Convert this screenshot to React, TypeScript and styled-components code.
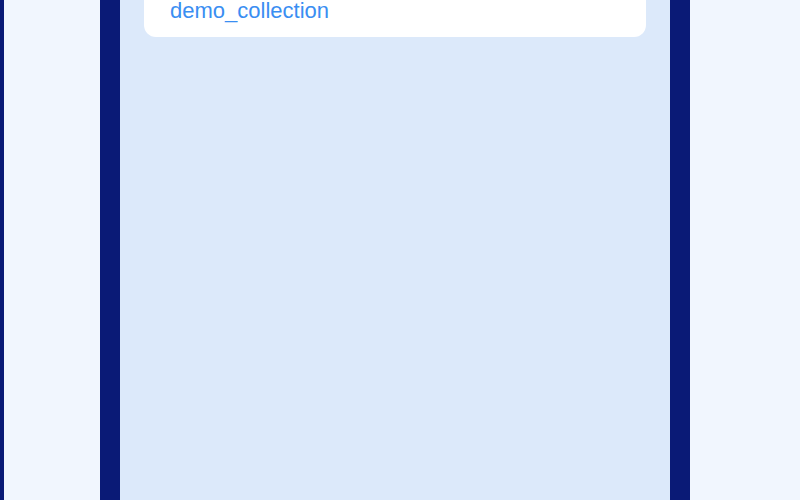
import React from "react";
import styled, { createGlobalStyle } from "styled-components";

const Global = createGlobalStyle`
  html, body, #root { margin: 0; padding: 0; height: 100%; }
  body { background: #f1f6fe; font-family: "Liberation Sans", Arial, sans-serif; overflow: hidden; }
`;

const Page = styled.div`
  display: flex;
  height: 100vh;
  background: #f1f6fe;
`;

const EdgeStrip = styled.div`
  width: 4px;
  flex: none;
  background: #0a1a76;
`;

const Gutter = styled.div<{ $w: number }>`
  width: ${(p) => p.$w}px;
  flex: none;
`;

const DeviceFrame = styled.div`
  box-sizing: border-box;
  width: 590px;
  flex: none;
  border-left: 20px solid #0a1a76;
  border-right: 20px solid #0a1a76;
  background: #dce9fa;
  display: flex;
  flex-direction: column;
  padding: 0 24px;
  overflow: hidden;
`;

const Card = styled.div`
  margin-top: -2px;
  background: #ffffff;
  border-radius: 0 0 12px 12px;
  padding: 0 26px 13px;
`;

const CollectionName = styled.div`
  font-size: 22px;
  line-height: 26px;
  color: #3a8ef2;
`;

export default function App() {
  return (
    <>
      <Global />
      <Page>
        <EdgeStrip />
        <Gutter $w={96} />
        <DeviceFrame>
          <Card>
            <CollectionName>demo_collection</CollectionName>
          </Card>
        </DeviceFrame>
      </Page>
    </>
  );
}
